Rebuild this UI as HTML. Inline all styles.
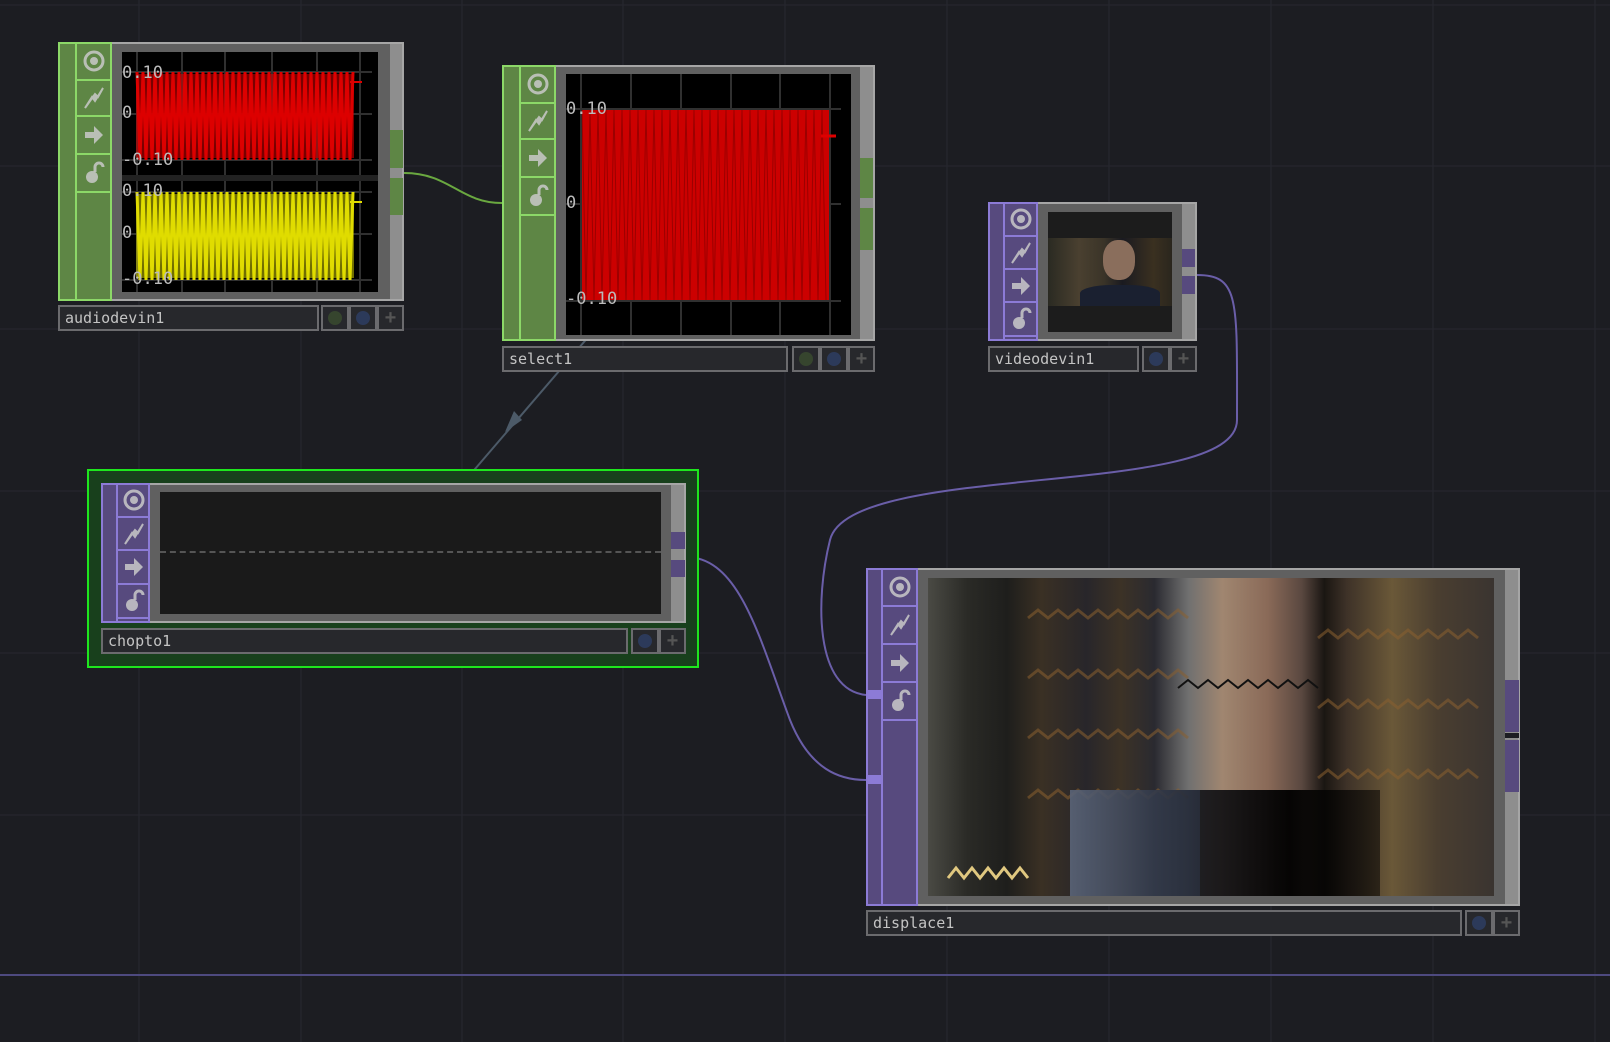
<!DOCTYPE html>
<html><head><meta charset="utf-8"><style>
html,body{margin:0;padding:0;width:1610px;height:1042px;overflow:hidden;background:#1c1d22;}
.abs{position:absolute;}
.lbl{position:absolute;background:#27282c;border:2px solid #6b6b6e;box-sizing:border-box;font-family:"DejaVu Sans Mono","Liberation Mono",monospace;font-size:15px;color:#c4c4c4;padding-left:5px;line-height:22px;}
.btn{position:absolute;background:#27282c;border:2px solid #6b6b6e;box-sizing:border-box;}
.dot{position:absolute;width:14px;height:14px;border-radius:50%;left:50%;top:50%;margin:-7px 0 0 -7px;}
</style></head><body>
<svg class="abs" style="left:0;top:0" width="1610" height="1042">
<g stroke="#26272e" stroke-width="1.3">
<line x1="139" y1="0" x2="139" y2="1042"/><line x1="301" y1="0" x2="301" y2="1042"/><line x1="462" y1="0" x2="462" y2="1042"/><line x1="623" y1="0" x2="623" y2="1042"/><line x1="785" y1="0" x2="785" y2="1042"/><line x1="947" y1="0" x2="947" y2="1042"/><line x1="1109" y1="0" x2="1109" y2="1042"/><line x1="1271" y1="0" x2="1271" y2="1042"/><line x1="1433" y1="0" x2="1433" y2="1042"/><line x1="1595" y1="0" x2="1595" y2="1042"/>
<line x1="0" y1="5" x2="1610" y2="5"/><line x1="0" y1="166" x2="1610" y2="166"/><line x1="0" y1="329" x2="1610" y2="329"/><line x1="0" y1="491" x2="1610" y2="491"/><line x1="0" y1="653" x2="1610" y2="653"/><line x1="0" y1="815" x2="1610" y2="815"/>
</g>
<line x1="0" y1="975" x2="1610" y2="975" stroke="#4e4a80" stroke-width="2"/>
<path d="M404 173 C450 173,460 203,502 203" stroke="#6aa840" stroke-width="2" fill="none"/>
<path d="M590 335 L463 483" stroke="#4c5a68" stroke-width="2" fill="none"/>
<polygon points="505,432 522,420 514,411" fill="#4c5a68"/>
<path d="M1197 275 C1240 275,1237 300,1237 420 C1237 500,850 460,830 540 C815 600,815 690,866 695" stroke="#6a5ea8" stroke-width="2" fill="none"/>
<path d="M686 557 C740 557,760 640,790 720 C810 770,840 780,866 780" stroke="#6a5ea8" stroke-width="2" fill="none"/>
</svg>

<div class="abs" style="left:87px;top:469px;width:612px;height:199px;border:2px solid #1ee61e;box-sizing:border-box;background:#18401c"></div>

<svg width="0" height="0" style="position:absolute"><defs>
<g id="ic1"><circle cx="0" cy="0" r="9" fill="none" stroke="#c9c9c9" stroke-width="3" opacity=".85"/><circle cx="0" cy="0" r="4" fill="#c9c9c9" opacity=".85"/></g>
<g id="ic2"><path d="M-9 10 L-2 -1 L1 3 L9 -10 L4 -1 L1 -4 Z" fill="#c9c9c9" stroke="#c9c9c9" stroke-width="2" opacity=".85"/></g>
<g id="ic3"><path d="M-9 -3 H0 V-9 L9 0 L0 9 V3 H-9 Z" fill="#c9c9c9" opacity=".85"/></g>
<g id="ic4"><circle cx="-2" cy="4" r="6" fill="#c9c9c9" opacity=".85"/><path d="M1 -1 V-6 A4 4 0 0 1 9 -6" stroke="#c9c9c9" stroke-width="3" fill="none" opacity=".85"/></g>
</defs></svg>

<!-- audiodevin1 -->
<div class="abs" style="left:58px;top:42px;width:346px;height:259px;background:#8e8e8e;border:2px solid #a6a6a6;box-sizing:border-box"></div>
<div class="abs" style="left:58px;top:42px;width:54px;height:259px;background:#5e8645;box-sizing:border-box;border:2px solid #8cd868"></div>
<div class="abs" style="left:75px;top:42px;width:2px;height:259px;background:#8cd868"></div>
<svg class="abs" style="left:77px;top:42px" width="35" height="259">
<g stroke="#8cd868" stroke-width="2"><line x1="0" y1="38" x2="35" y2="38"/><line x1="0" y1="74" x2="35" y2="74"/><line x1="0" y1="112" x2="35" y2="112"/><line x1="0" y1="150" x2="35" y2="150"/></g>
<use href="#ic1" x="17" y="19"/><use href="#ic2" x="17" y="56"/><use href="#ic3" x="17" y="93"/><use href="#ic4" x="17" y="131"/></svg>
<div class="abs" style="left:112px;top:44px;width:278px;height:255px;background:#606060"></div>
<div class="abs" style="left:122px;top:52px;width:256px;height:240px;background:#000"></div>
<div class="abs" style="left:390px;top:130px;width:13px;height:38px;background:#5e8645"></div>
<div class="abs" style="left:390px;top:178px;width:13px;height:37px;background:#5e8645"></div>
<svg class="abs" style="left:122px;top:52px" width="256" height="240">
<g stroke="#303030" stroke-width="2"><line x1="15" y1="0" x2="15" y2="240"/><line x1="60" y1="0" x2="60" y2="240"/><line x1="103" y1="0" x2="103" y2="240"/><line x1="150" y1="0" x2="150" y2="240"/><line x1="195" y1="0" x2="195" y2="240"/><line x1="238" y1="0" x2="238" y2="240"/>
<line x1="0" y1="20" x2="250" y2="20"/><line x1="0" y1="62" x2="250" y2="62"/><line x1="0" y1="108" x2="250" y2="108"/><line x1="0" y1="140" x2="250" y2="140"/><line x1="0" y1="182" x2="250" y2="182"/><line x1="0" y1="228" x2="250" y2="228"/></g>
<rect x="0" y="123" width="256" height="6" fill="#222"/>
<rect x="14" y="22" width="218" height="84" fill="#dd0000" opacity=".55"/>
<path d="M15 20 L18 108 L21 20 L24 108 L27 20 L30 108 L33 20 L36 108 L39 20 L42 108 L45 20 L48 108 L51 20 L54 108 L57 20 L60 108 L63 20 L66 108 L69 20 L72 108 L75 20 L78 108 L81 20 L84 108 L87 20 L90 108 L93 20 L96 108 L99 20 L102 108 L105 20 L108 108 L111 20 L114 108 L117 20 L120 108 L123 20 L126 108 L129 20 L132 108 L135 20 L138 108 L141 20 L144 108 L147 20 L150 108 L153 20 L156 108 L159 20 L162 108 L165 20 L168 108 L171 20 L174 108 L177 20 L180 108 L183 20 L186 108 L189 20 L192 108 L195 20 L198 108 L201 20 L204 108 L207 20 L210 108 L213 20 L216 108 L219 20 L222 108 L225 20 L228 108 L231 20" stroke="#dd0000" stroke-width="3" fill="none"/>
<rect x="14" y="142" width="218" height="84" fill="#e0dc00" opacity=".5"/>
<g transform="translate(0,120)"><path d="M15 20 L18 108 L21 20 L24 108 L27 20 L30 108 L33 20 L36 108 L39 20 L42 108 L45 20 L48 108 L51 20 L54 108 L57 20 L60 108 L63 20 L66 108 L69 20 L72 108 L75 20 L78 108 L81 20 L84 108 L87 20 L90 108 L93 20 L96 108 L99 20 L102 108 L105 20 L108 108 L111 20 L114 108 L117 20 L120 108 L123 20 L126 108 L129 20 L132 108 L135 20 L138 108 L141 20 L144 108 L147 20 L150 108 L153 20 L156 108 L159 20 L162 108 L165 20 L168 108 L171 20 L174 108 L177 20 L180 108 L183 20 L186 108 L189 20 L192 108 L195 20 L198 108 L201 20 L204 108 L207 20 L210 108 L213 20 L216 108 L219 20 L222 108 L225 20 L228 108 L231 20" stroke="#e0dc00" stroke-width="3" fill="none"/></g>
<g font-family="DejaVu Sans Mono,monospace" font-size="17" fill="#bbb"><text x="0" y="26">0.10</text><text x="0" y="66">0</text><text x="0" y="113">-0.10</text><text x="0" y="144">0.10</text><text x="0" y="186">0</text><text x="0" y="232">-0.10</text></g>
<line x1="228" y1="30" x2="240" y2="30" stroke="#dd0000" stroke-width="2"/><line x1="228" y1="150" x2="240" y2="150" stroke="#e0dc00" stroke-width="2"/>
</svg>
<div class="lbl" style="left:58px;top:305px;width:261px;height:26px">audiodevin1</div>
<div class="btn" style="left:321px;top:305px;width:28px;height:26px"><div class="dot" style="background:#36452e"></div></div>
<div class="btn" style="left:349px;top:305px;width:28px;height:26px"><div class="dot" style="background:#2c3a5a"></div></div>
<div class="btn" style="left:377px;top:305px;width:27px;height:26px;color:#555;font:bold 20px sans-serif;text-align:center;line-height:22px">+</div>

<!-- select1 -->
<div class="abs" style="left:502px;top:65px;width:373px;height:276px;background:#8e8e8e;border:2px solid #a6a6a6;box-sizing:border-box"></div>
<div class="abs" style="left:502px;top:65px;width:54px;height:276px;background:#5e8645;box-sizing:border-box;border:2px solid #8cd868"></div>
<div class="abs" style="left:519px;top:65px;width:2px;height:276px;background:#8cd868"></div>
<svg class="abs" style="left:521px;top:65px" width="35" height="276">
<g stroke="#8cd868" stroke-width="2"><line x1="0" y1="38" x2="35" y2="38"/><line x1="0" y1="74" x2="35" y2="74"/><line x1="0" y1="112" x2="35" y2="112"/><line x1="0" y1="150" x2="35" y2="150"/></g>
<use href="#ic1" x="17" y="19"/><use href="#ic2" x="17" y="56"/><use href="#ic3" x="17" y="93"/><use href="#ic4" x="17" y="131"/></svg>
<div class="abs" style="left:556px;top:67px;width:304px;height:272px;background:#606060"></div>
<div class="abs" style="left:566px;top:74px;width:285px;height:261px;background:#000"></div>
<div class="abs" style="left:860px;top:158px;width:13px;height:40px;background:#5e8645"></div>
<div class="abs" style="left:860px;top:208px;width:13px;height:42px;background:#5e8645"></div>
<svg class="abs" style="left:566px;top:74px" width="285" height="261">
<g stroke="#303030" stroke-width="2"><line x1="15" y1="0" x2="15" y2="261"/><line x1="65" y1="0" x2="65" y2="261"/><line x1="115" y1="0" x2="115" y2="261"/><line x1="165" y1="0" x2="165" y2="261"/><line x1="214" y1="0" x2="214" y2="261"/><line x1="264" y1="0" x2="264" y2="261"/>
<line x1="0" y1="35" x2="275" y2="35"/><line x1="0" y1="130" x2="275" y2="130"/><line x1="0" y1="227" x2="275" y2="227"/></g>
<rect x="16" y="36" width="247" height="190" fill="#cc0000"/>
<path d="M16 36 L20 226 L24 36 L28 226 L32 36 L36 226 L40 36 L44 226 L48 36 L52 226 L56 36 L60 226 L64 36 L68 226 L72 36 L76 226 L80 36 L84 226 L88 36 L92 226 L96 36 L100 226 L104 36 L108 226 L112 36 L116 226 L120 36 L124 226 L128 36 L132 226 L136 36 L140 226 L144 36 L148 226 L152 36 L156 226 L160 36 L164 226 L168 36 L172 226 L176 36 L180 226 L184 36 L188 226 L192 36 L196 226 L200 36 L204 226 L208 36 L212 226 L216 36 L220 226 L224 36 L228 226 L232 36 L236 226 L240 36 L244 226 L248 36 L252 226 L256 36 L260 226" stroke="#7a0000" stroke-width="1" fill="none" opacity=".6"/>
<g font-family="DejaVu Sans Mono,monospace" font-size="17" fill="#bbb"><text x="0" y="40">0.10</text><text x="0" y="134">0</text><text x="0" y="230">-0.10</text></g>
<line x1="255" y1="62" x2="270" y2="62" stroke="#dd0000" stroke-width="3"/>
</svg>
<div class="lbl" style="left:502px;top:346px;width:286px;height:26px">select1</div>
<div class="btn" style="left:792px;top:346px;width:28px;height:26px"><div class="dot" style="background:#36452e"></div></div>
<div class="btn" style="left:820px;top:346px;width:28px;height:26px"><div class="dot" style="background:#2c3a5a"></div></div>
<div class="btn" style="left:848px;top:346px;width:27px;height:26px;color:#555;font:bold 20px sans-serif;text-align:center;line-height:22px">+</div>

<!-- videodevin1 -->
<div class="abs" style="left:988px;top:202px;width:209px;height:139px;background:#8e8e8e;border:2px solid #a6a6a6;box-sizing:border-box"></div>
<div class="abs" style="left:988px;top:202px;width:50px;height:139px;background:#574a7e;box-sizing:border-box;border:2px solid #8c7bd6"></div>
<div class="abs" style="left:1003px;top:202px;width:2px;height:139px;background:#8c7bd6"></div>
<svg class="abs" style="left:1005px;top:202px" width="33" height="139">
<g stroke="#8c7bd6" stroke-width="2"><line x1="0" y1="34" x2="33" y2="34"/><line x1="0" y1="67" x2="33" y2="67"/><line x1="0" y1="100" x2="33" y2="100"/><line x1="0" y1="134" x2="33" y2="134"/></g>
<use href="#ic1" x="16" y="17"/><use href="#ic2" x="16" y="51"/><use href="#ic3" x="16" y="84"/><use href="#ic4" x="16" y="117"/></svg>
<div class="abs" style="left:1038px;top:204px;width:144px;height:135px;background:#606060"></div>
<div class="abs" style="left:1048px;top:212px;width:124px;height:120px;background:#1c1c1c"></div>
<div class="abs" style="left:1048px;top:238px;width:124px;height:68px;background:linear-gradient(90deg,#2a2a22 0%,#4a4030 25%,#3a3428 45%,#1a1a20 60%,#3a3020 85%,#2a261e 100%)"></div>
<div class="abs" style="left:1103px;top:240px;width:32px;height:40px;border-radius:45%;background:#8a6e5c"></div>
<div class="abs" style="left:1080px;top:285px;width:80px;height:21px;border-radius:40% 40% 0 0;background:#1a2030"></div>
<div class="abs" style="left:1182px;top:249px;width:13px;height:18px;background:#574a7e"></div>
<div class="abs" style="left:1182px;top:276px;width:13px;height:18px;background:#574a7e"></div>
<div class="lbl" style="left:988px;top:346px;width:151px;height:26px">videodevin1</div>
<div class="btn" style="left:1142px;top:346px;width:28px;height:26px"><div class="dot" style="background:#2c3a5a"></div></div>
<div class="btn" style="left:1170px;top:346px;width:27px;height:26px;color:#555;font:bold 20px sans-serif;text-align:center;line-height:22px">+</div>

<!-- chopto1 -->
<div class="abs" style="left:101px;top:483px;width:585px;height:140px;background:#8e8e8e;border:2px solid #a6a6a6;box-sizing:border-box"></div>
<div class="abs" style="left:101px;top:483px;width:49px;height:140px;background:#574a7e;box-sizing:border-box;border:2px solid #8c7bd6"></div>
<div class="abs" style="left:116px;top:483px;width:2px;height:140px;background:#8c7bd6"></div>
<svg class="abs" style="left:118px;top:483px" width="32" height="140">
<g stroke="#8c7bd6" stroke-width="2"><line x1="0" y1="34" x2="32" y2="34"/><line x1="0" y1="67" x2="32" y2="67"/><line x1="0" y1="101" x2="32" y2="101"/><line x1="0" y1="135" x2="32" y2="135"/></g>
<use href="#ic1" x="16" y="17"/><use href="#ic2" x="16" y="51"/><use href="#ic3" x="16" y="84"/><use href="#ic4" x="16" y="118"/></svg>
<div class="abs" style="left:150px;top:485px;width:521px;height:136px;background:#606060"></div>
<div class="abs" style="left:160px;top:492px;width:501px;height:122px;background:#1a1a1a"></div>
<div class="abs" style="left:160px;top:551px;width:501px;height:0;border-top:2px dashed #555"></div>
<div class="abs" style="left:671px;top:532px;width:14px;height:17px;background:#574a7e"></div>
<div class="abs" style="left:671px;top:560px;width:14px;height:17px;background:#574a7e"></div>
<div class="lbl" style="left:101px;top:628px;width:527px;height:26px">chopto1</div>
<div class="btn" style="left:631px;top:628px;width:28px;height:26px"><div class="dot" style="background:#2c3a5a"></div></div>
<div class="btn" style="left:659px;top:628px;width:27px;height:26px;color:#555;font:bold 20px sans-serif;text-align:center;line-height:22px">+</div>

<!-- displace1 -->
<div class="abs" style="left:866px;top:568px;width:654px;height:338px;background:#8e8e8e;border:2px solid #a6a6a6;box-sizing:border-box"></div>
<div class="abs" style="left:866px;top:568px;width:52px;height:338px;background:#574a7e;box-sizing:border-box;border:2px solid #8c7bd6"></div>
<div class="abs" style="left:881px;top:568px;width:2px;height:338px;background:#8c7bd6"></div>
<svg class="abs" style="left:883px;top:568px" width="35" height="338">
<g stroke="#8c7bd6" stroke-width="2"><line x1="0" y1="38" x2="35" y2="38"/><line x1="0" y1="76" x2="35" y2="76"/><line x1="0" y1="114" x2="35" y2="114"/><line x1="0" y1="152" x2="35" y2="152"/></g>
<use href="#ic1" x="17" y="19"/><use href="#ic2" x="17" y="57"/><use href="#ic3" x="17" y="95"/><use href="#ic4" x="17" y="133"/></svg>
<div class="abs" style="left:866px;top:690px;width:16px;height:9px;background:#8c7bd6"></div>
<div class="abs" style="left:866px;top:775px;width:16px;height:9px;background:#8c7bd6"></div>
<div class="abs" style="left:918px;top:570px;width:587px;height:334px;background:#606060"></div>
<div class="abs" style="left:928px;top:578px;width:566px;height:318px;background:linear-gradient(90deg,#4a4a44 0%,#2a2a26 7%,#1e1e1c 14%,#3a3024 20%,#28262a 28%,#3c3226 34%,#2a2a30 40%,#707070 46%,#a08670 52%,#8a6a58 60%,#5a4840 66%,#1a1612 70%,#3e3228 74%,#6a5838 82%,#4a3e30 90%,#3a3430 100%)"></div>
<svg class="abs" style="left:928px;top:578px" width="566" height="318">
<g fill="none" stroke="#8a6030" stroke-width="3" opacity=".55">
<path d="M100 40 l10 -8 l10 8 l10 -8 l10 8 l10 -8 l10 8 l10 -8 l10 8 l10 -8 l10 8 l10 -8 l10 8 l10 -8 l10 8 l10 -8 l10 8"/>
<path d="M100 100 l10 -8 l10 8 l10 -8 l10 8 l10 -8 l10 8 l10 -8 l10 8 l10 -8 l10 8 l10 -8 l10 8 l10 -8 l10 8 l10 -8 l10 8"/>
<path d="M100 160 l10 -8 l10 8 l10 -8 l10 8 l10 -8 l10 8 l10 -8 l10 8 l10 -8 l10 8 l10 -8 l10 8 l10 -8 l10 8 l10 -8 l10 8"/>
<path d="M100 220 l10 -8 l10 8 l10 -8 l10 8 l10 -8 l10 8 l10 -8 l10 8 l10 -8 l10 8 l10 -8 l10 8 l10 -8 l10 8 l10 -8 l10 8"/>
<path d="M390 60 l10 -8 l10 8 l10 -8 l10 8 l10 -8 l10 8 l10 -8 l10 8 l10 -8 l10 8 l10 -8 l10 8 l10 -8 l10 8 l10 -8 l10 8"/>
<path d="M390 130 l10 -8 l10 8 l10 -8 l10 8 l10 -8 l10 8 l10 -8 l10 8 l10 -8 l10 8 l10 -8 l10 8 l10 -8 l10 8 l10 -8 l10 8"/>
<path d="M390 200 l10 -8 l10 8 l10 -8 l10 8 l10 -8 l10 8 l10 -8 l10 8 l10 -8 l10 8 l10 -8 l10 8 l10 -8 l10 8 l10 -8 l10 8"/>
</g>
<path d="M250 110 l10 -8 l10 8 l10 -8 l10 8 l10 -8 l10 8 l10 -8 l10 8 l10 -8 l10 8 l10 -8 l10 8 l10 -8 l10 8" stroke="#111" stroke-width="2" fill="none"/>
<path d="M20 300 l8 -10 l8 10 l8 -10 l8 10 l8 -10 l8 10 l8 -10 l8 10 l8 -10 l8 10" stroke="#e0c880" stroke-width="3" fill="none"/>
</svg>
<div class="abs" style="left:1070px;top:790px;width:130px;height:106px;background:linear-gradient(90deg,rgba(90,100,120,.9),rgba(30,36,50,.9))"></div>
<div class="abs" style="left:1200px;top:790px;width:180px;height:106px;background:linear-gradient(90deg,rgba(20,20,24,.9),rgba(0,0,0,.95) 50%,rgba(10,8,6,.6))"></div>
<div class="abs" style="left:1505px;top:680px;width:14px;height:52px;background:#574a7e"></div>
<div class="abs" style="left:1505px;top:740px;width:14px;height:52px;background:#574a7e"></div>
<div class="abs" style="left:1505px;top:733px;width:14px;height:5px;background:#1c1d22"></div>
<div class="lbl" style="left:866px;top:910px;width:596px;height:26px">displace1</div>
<div class="btn" style="left:1465px;top:910px;width:28px;height:26px"><div class="dot" style="background:#2c3a5a"></div></div>
<div class="btn" style="left:1493px;top:910px;width:27px;height:26px;color:#555;font:bold 20px sans-serif;text-align:center;line-height:22px">+</div>
</body></html>
